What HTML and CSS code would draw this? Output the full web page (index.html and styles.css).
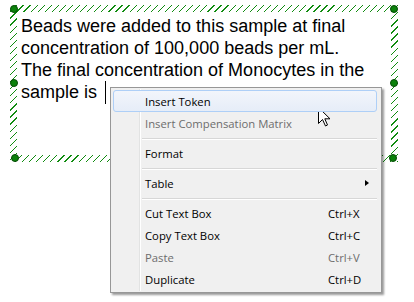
FILE: index.html
```html
<!DOCTYPE html>
<html>
<head>
<meta charset="utf-8">
<link rel="stylesheet" href="styles.css">
</head>
<body>
<div class="stage">
  <div class="frame">
    <div class="inner">
      <p class="text">Beads were added to this sample at final<br>concentration of 100,000 beads per mL.<br>The final concentration of Monocytes in the<br>sample is <span class="caret"></span></p>
    </div>
    <span class="handle h-tl"></span>
    <span class="handle h-tr"></span>
    <span class="handle h-ml"></span>
    <span class="handle h-mr"></span>
    <span class="handle h-bl"></span>
    <span class="handle h-br"></span>
  </div>

  <div class="menu">
    <div class="item active"><span>Insert Token</span></div>
    <div class="item disabled"><span>Insert Compensation Matrix</span></div>
    <div class="sep"></div>
    <div class="item"><span>Format</span></div>
    <div class="sep"></div>
    <div class="item"><span>Table</span><span class="arrow"></span></div>
    <div class="sep"></div>
    <div class="item"><span>Cut Text Box</span><span class="key">Ctrl+X</span></div>
    <div class="item"><span>Copy Text Box</span><span class="key">Ctrl+C</span></div>
    <div class="item disabled"><span>Paste</span><span class="key">Ctrl+V</span></div>
    <div class="item"><span>Duplicate</span><span class="key">Ctrl+D</span></div>
  </div>

  <svg class="pointer" width="13" height="20" viewBox="0 0 13 20">
    <path d="M0.5 0.5 L0.5 16.5 L4.5 12.5 L7.5 19 L9.5 18 L6.8 11.8 L12 11.8 Z" fill="#fff" stroke="#000" stroke-width="1" stroke-linejoin="miter"/>
  </svg>
</div>
</body>
</html>
```

FILE: styles.css
```css
html, body {
  margin: 0;
  padding: 0;
  background: #ffffff;
}

.stage {
  position: relative;
  width: 414px;
  height: 302px;
  overflow: hidden;
  padding: 5px 0 0 10px;
  box-sizing: border-box;
}

.frame {
  position: relative;
  width: 388px;
  height: 157px;
  box-sizing: border-box;
  padding: 7px;
  background: repeating-linear-gradient(135deg, #ffffff 0px, #ffffff 4.1px, #108c10 4.1px, #108c10 5px);
}

.inner {
  background: #ffffff;
  height: 100%;
  padding: 3px 0 0 4px;
  box-sizing: border-box;
}

.text {
  margin: 0;
  font-family: "Liberation Sans", Arial, sans-serif;
  font-size: 18px;
  line-height: 22px;
  color: #000;
  white-space: nowrap;
}

.caret {
  display: inline-block;
  width: 1px;
  height: 23px;
  margin-left: 3px;
  background: #000;
  vertical-align: -6px;
}

.handle {
  position: absolute;
  width: 8px;
  height: 8px;
  border-radius: 50%;
  background: #0b820b;
  border: 1px solid #064a06;
  box-sizing: border-box;
}
.h-tl { left: 0px; top: 0px; }
.h-tr { left: 380px; top: 0px; }
.h-ml { left: 0px; top: 74px; }
.h-mr { left: 380px; top: 74px; }
.h-bl { left: 1px; top: 149px; }
.h-br { left: 379px; top: 149px; }

.menu {
  position: absolute;
  left: 110px;
  top: 87px;
  width: 272px;
  box-sizing: border-box;
  background: #f0f0f0;
  border: 1px solid #979797;
  padding: 2px 4px 2px 2px;
  box-shadow: 2px 2px 2px rgba(0, 0, 0, 0.4);
  font-family: "Open Sans", "Noto Sans", sans-serif;
  font-size: 11.3px;
  color: #000;
}

.menu::before {
  content: "";
  position: absolute;
  left: 28px;
  top: 1px;
  bottom: 1px;
  width: 1px;
  background: #e2e3e3;
  box-shadow: 1px 0 0 #ffffff;
}

.item {
  position: relative;
  z-index: 1;
  height: 22px;
  box-sizing: border-box;
  display: grid;
  grid-template-columns: 183px 1fr;
  align-items: center;
  padding-left: 31px;
  border: 1px solid transparent;
  border-radius: 3px;
  white-space: nowrap;
}

.item.active {
  border-color: #aecff7;
  background: linear-gradient(#f2f5fb, #e6edf8);
}

.item.disabled {
  color: #6d6d6d;
}

.arrow {
  justify-self: end;
  margin-right: 7px;
  width: 0;
  height: 0;
  border-top: 3.5px solid transparent;
  border-bottom: 3.5px solid transparent;
  border-left: 4px solid #000;
}

.sep {
  position: relative;
  z-index: 1;
  height: 8px;
  margin-left: 29px;
  box-sizing: border-box;
  padding-top: 4px;
}
.sep::after {
  content: "";
  display: block;
  height: 1px;
  background: #d7d7d7;
  box-shadow: 0 1px 0 #ffffff;
}

.pointer {
  position: absolute;
  left: 318px;
  top: 107px;
}
```
